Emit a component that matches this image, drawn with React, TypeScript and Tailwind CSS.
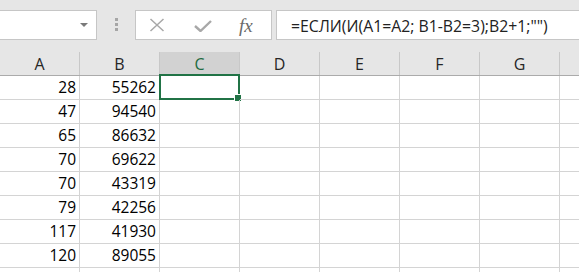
import React from "react";

const cols = ["A", "B", "C", "D", "E", "F", "G", "H"];
const data: [string, string][] = [
  ["28", "55262"],
  ["47", "94540"],
  ["65", "86632"],
  ["70", "69622"],
  ["70", "43319"],
  ["79", "42256"],
  ["117", "41930"],
  ["120", "89055"],
  ["", ""],
];

export default function App() {
  return (
    <div
      className="w-[579px] h-[272px] overflow-hidden bg-white"
      style={{ fontFamily: "'Open Sans', 'Noto Sans', sans-serif" }}
    >
      {/* Formula bar */}
      <div className="h-[52px] bg-[#e6e6e6] pt-[10px] flex items-start">
        <div className="w-[97px] h-[30px] bg-white border-y border-r border-[#c6c6c6] flex items-center justify-end pr-[8px]">
          <div className="w-0 h-0 border-l-[4px] border-r-[4px] border-t-[4px] border-l-transparent border-r-transparent border-t-[#7a7a7a]" />
        </div>
        <div className="ml-[18px] mt-[8px] flex flex-col gap-[2px]">
          <div className="w-[3px] h-[3px] bg-[#a6a6a6]" />
          <div className="w-[3px] h-[3px] bg-[#a6a6a6]" />
          <div className="w-[3px] h-[3px] bg-[#a6a6a6]" />
        </div>
        <div className="ml-[17px] w-[137px] h-[30px] bg-white border border-[#c6c6c6] flex items-center">
          <svg width="16" height="14" viewBox="0 0 16 14" className="ml-[13px]">
            <path d="M1.5 1 L14.5 13 M14.5 1 L1.5 13" stroke="#a8a8a8" strokeWidth="1.5" fill="none" />
          </svg>
          <svg width="18" height="12" viewBox="0 0 18 12" className="ml-[29px] mt-[2px]">
            <path d="M1 6 L6.5 11 L17 1" stroke="#a8a8a8" strokeWidth="2.4" fill="none" />
          </svg>
          <span
            className="ml-[27px] text-[19px] italic text-[#6a6a6a] leading-none"
            style={{ fontFamily: "'Liberation Serif', 'DejaVu Serif', serif" }}
          >
            fx
          </span>
        </div>
        <div className="ml-[4px] flex-1 h-[30px] bg-white border-y border-l border-[#c6c6c6] flex items-center pl-[14px] pt-[3px]">
          <span className="text-[15.8px] text-[#222] whitespace-nowrap">
            =ЕСЛИ(И(A1=A2; B1-B2=3);B2+1;"")
          </span>
        </div>
      </div>

      {/* Column headers */}
      <div className="flex h-[24px] bg-[#e6e6e6] border-b border-[#ababab]">
        {cols.map((c) => (
          <div
            key={c}
            className={
              "w-[80px] shrink-0 border-r border-[#c8c8c8] flex items-center justify-center text-[16px] pt-[1px] " +
              (c === "C" ? "bg-[#d2d2d2] text-[#1e6b41]" : "text-[#262626]")
            }
          >
            {c === "H" ? "" : c}
          </div>
        ))}
      </div>

      {/* Grid rows */}
      {data.map((row, ri) => (
        <div key={ri} className="flex h-[24px]">
          {cols.map((c, ci) => (
            <div
              key={c}
              className="relative w-[80px] h-[24px] shrink-0 border-r border-b border-[#d4d4d4] flex items-end justify-end pr-[3px] pb-[1px] text-[15.5px] text-black leading-[22px]"
            >
              {ci === 0 ? row[0] : ci === 1 ? row[1] : ""}
              {ri === 0 && c === "C" && (
                <div className="absolute -left-[1px] -top-[2px] -right-[1px] -bottom-[1px] border-2 border-[#217346]">
                  <div className="absolute -right-[3px] -bottom-[3px] w-[6px] h-[6px] bg-[#217346] outline outline-1 outline-white" />
                </div>
              )}
            </div>
          ))}
        </div>
      ))}
    </div>
  );
}
